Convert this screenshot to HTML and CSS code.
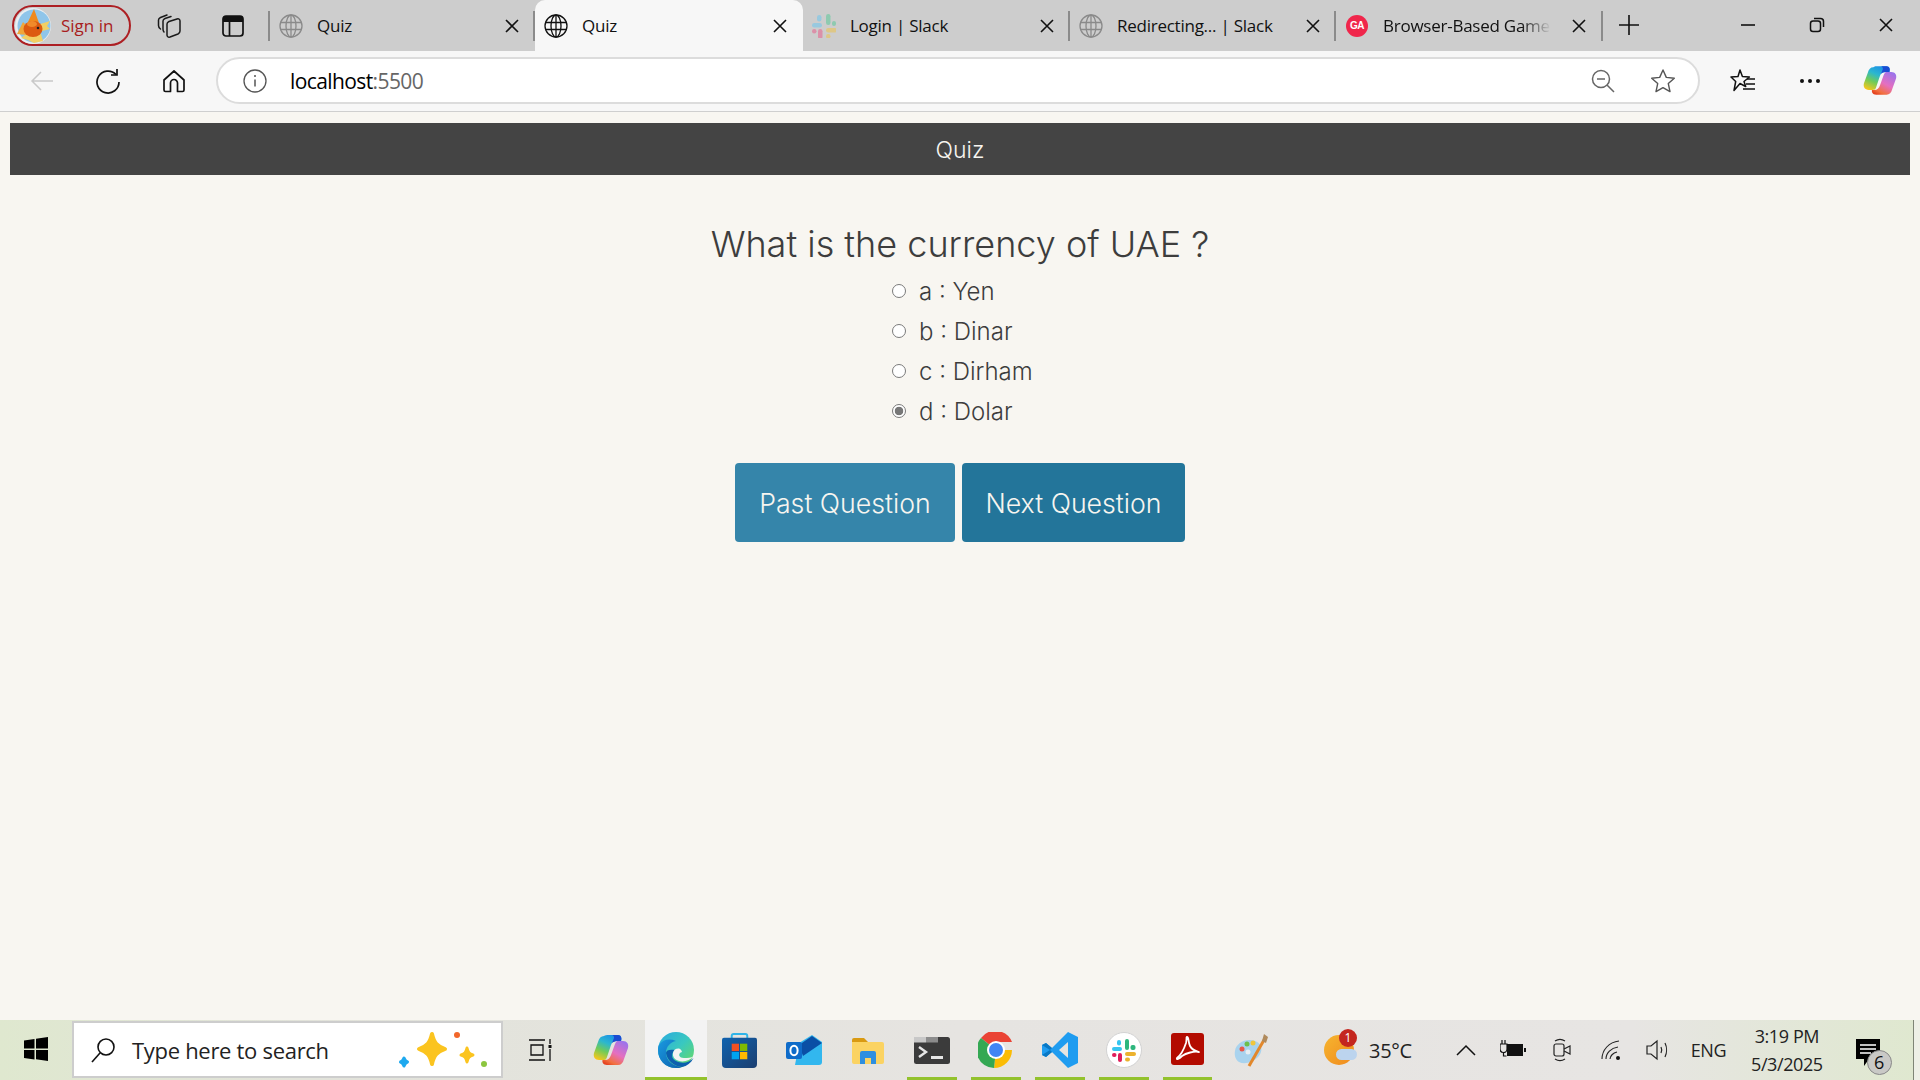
FILE: index.html
```html
<!DOCTYPE html>
<html lang="en">
<head>
<meta charset="utf-8">
<title>Quiz</title>
<link rel="stylesheet" href="styles.css">
</head>
<body>
<svg class="defs" width="0" height="0" aria-hidden="true">
  <defs>
    <linearGradient id="cpA" x1="0.7" y1="0" x2="0.2" y2="1"><stop offset="0" stop-color="#1b8fe6"/><stop offset=".35" stop-color="#2bb7d0"/><stop offset=".65" stop-color="#6fcb5a"/><stop offset="1" stop-color="#f6c71c"/></linearGradient>
    <linearGradient id="cpB" x1="0.8" y1="0" x2="0.2" y2="1"><stop offset="0" stop-color="#9a74ec"/><stop offset=".5" stop-color="#e56fc0"/><stop offset=".85" stop-color="#f2713f"/><stop offset="1" stop-color="#e5421f"/></linearGradient>
    <linearGradient id="edgeG" x1="0" y1="0" x2="1" y2="1"><stop offset="0" stop-color="#2aa9e0"/><stop offset=".5" stop-color="#39c8c0"/><stop offset="1" stop-color="#6fdc58"/></linearGradient>
    <linearGradient id="edgeB" x1="0" y1="0" x2="1" y2="1"><stop offset="0" stop-color="#1a9be0"/><stop offset="1" stop-color="#0c5fae"/></linearGradient>
    <linearGradient id="storeG" x1="0" y1="0" x2="1" y2="1"><stop offset="0" stop-color="#0f62ae"/><stop offset="1" stop-color="#1c3f70"/></linearGradient>
    <symbol id="globe" viewBox="0 0 24 24"><g fill="none" stroke="currentColor" stroke-width="1.3"><circle cx="12" cy="12" r="11"/><ellipse cx="12" cy="12" rx="5" ry="11"/><path d="M1.5 8.500h21M1.5 15.500h21M12 1v22"/></g></symbol>
    <symbol id="x" viewBox="0 0 16 16"><path d="M2 2l12 12M14 2L2 14" fill="none" stroke="currentColor" stroke-width="1.6"/></symbol>
    <symbol id="copilot" viewBox="0 0 36 32">
      <path d="M11 2C12 1 14 1 15 1H25C28 1 29 4 28 7H24C21 7 19 8 18 11L14 23C13 26 12 26 10 26H6C2 26 0 23 1 19L5 8C6 4 8 2 11 2Z" fill="url(#cpA)"/>
      <path d="M19 1H25C28 1 29 4 28 7H24C22 7 20 8 19 9L21 4C21.500 2.500 20 1 19 1Z" fill="#1a4cd2"/>
      <path d="M25 31H14C10 31 9 28 9.500 26H12C15 26 17 24 18 21L22 10C23 7.500 24 7 25 7H30C34 7 36 10 35 14L31 25C30 29 28 31 25 31Z" fill="url(#cpB)"/>
    </symbol>
  </defs>
</svg>

<header class="tabstrip">
  <button class="signin">
    <svg class="avatar" viewBox="0 0 36 36"><circle cx="18" cy="18" r="18" fill="#e9eef2"/><circle cx="19" cy="18" r="16.500" fill="#8fc5ea"/><path d="M22 17l13-4-3 5 3 3-12 3zM6 30l8-6 12 2 2 7-9 2-6-3z" fill="#f2cf63"/><path d="M13 14L19 1l5 14z" fill="#ef8a1e"/><path d="M2 26l6-12 5 5-1 8z" fill="#f0a63a"/><ellipse cx="18" cy="21" rx="9.500" ry="8" fill="#dc5a10"/><ellipse cx="17" cy="16" rx="5" ry="3" fill="#f08a2a"/><circle cx="23" cy="20" r="1.300" fill="#222"/></svg>
    <span>Sign in</span>
  </button>
  <div class="strip-btn">
    <svg width="24" height="24" viewBox="0 0 24 24"><g fill="none" stroke="#1a1a1a" stroke-width="1.500" stroke-linecap="round" stroke-linejoin="round"><path d="M10 10C10 8.500 11 8 12 7.500L20 5C22 4.500 23 5.500 23 7V17C23 18.500 22 19.500 21 20L13 23C11 23.500 10 22.500 10 21Z"/><path d="M7 18C6 17 6 16 6 15V7C6 5.500 7 5 8 4.500L14 2.500"/><path d="M3.500 15C2 14 1.500 13 1.500 11.500V6C1.500 4.500 2.500 4 3.500 3.500L10 1"/></g></svg>
  </div>
  <div class="strip-btn">
    <svg width="22" height="22" viewBox="0 0 22 22"><rect x="1" y="1" width="20" height="20" rx="3" fill="none" stroke="#111" stroke-width="1.700"/><path d="M1 3.500a2.500 2.500 0 012.500-2.500h15a2.500 2.500 0 012.500 2.500V7H1z" fill="#111"/><path d="M7.500 7v14" stroke="#111" stroke-width="1.700"/></svg>
  </div>
  <div class="tabs">
    <div class="tab tab-sep">
      <svg class="fav fav-dim"><use href="#globe"/></svg><span class="tab-title">Quiz</span><svg class="close"><use href="#x"/></svg>
    </div>
    <div class="tab tab-active">
      <svg class="fav"><use href="#globe"/></svg><span class="tab-title">Quiz</span><svg class="close"><use href="#x"/></svg>
    </div>
    <div class="tab tab-sep">
      <svg class="fav" viewBox="0 0 24 24"><g opacity=".55"><rect x="0" y="9" width="10" height="4.500" rx="2.200" fill="#6ec7ee"/><rect x="5" y="1" width="4.500" height="6.500" rx="2.200" fill="#6ec7ee"/><rect x="14" y="0" width="4.500" height="11" rx="2.200" fill="#5cc89a"/><rect x="20" y="7" width="4" height="5" rx="2" fill="#5cc89a"/><rect x="14" y="14" width="11" height="4.500" rx="2.200" fill="#edc34d"/><rect x="14" y="20" width="4.500" height="4.500" rx="2.200" fill="#edc34d"/><rect x="6" y="15" width="4.500" height="10" rx="2.200" fill="#e8618c"/><rect x="0" y="15" width="4.500" height="4.500" rx="2.200" fill="#e8618c"/></g></svg><span class="tab-title">Login | Slack</span><svg class="close"><use href="#x"/></svg>
    </div>
    <div class="tab tab-sep">
      <svg class="fav fav-dim"><use href="#globe"/></svg><span class="tab-title">Redirecting... | Slack</span><svg class="close"><use href="#x"/></svg>
    </div>
    <div class="tab tab-sep">
      <svg class="fav" viewBox="0 0 24 24"><circle cx="12" cy="12" r="11" fill="#f0264b"/></svg><span class="ga">GA</span><span class="tab-title tab-fade">Browser-Based Game</span><svg class="close"><use href="#x"/></svg>
    </div>
  </div>
  <div class="newtab">
    <svg width="22" height="22" viewBox="0 0 22 22"><path d="M11 1v20M1 11h20" stroke="#111" stroke-width="1.6"/></svg>
  </div>
  <div class="window-btns">
    <div class="win-btn"><svg width="16" height="16" viewBox="0 0 16 16"><path d="M1 8h14" stroke="#111" stroke-width="1.600"/></svg></div>
    <div class="win-btn"><svg width="16" height="16" viewBox="0 0 16 16"><rect x="1.500" y="4" width="10" height="10.500" rx="2.500" fill="none" stroke="#111" stroke-width="1.500"/><path d="M5 1.500h6.500a3 3 0 013 3V10" fill="none" stroke="#111" stroke-width="1.500"/></svg></div>
    <div class="win-btn"><svg width="16" height="16" viewBox="0 0 16 16"><use href="#x"/></svg></div>
  </div>
</header>

<nav class="toolbar">
  <div class="tool-btn">
    <svg width="24" height="22" viewBox="0 0 24 22"><path d="M23 11H2M11 2l-9 9 9 9" fill="none" stroke="#c9c9c9" stroke-width="1.500"/></svg>
  </div>
  <div class="tool-btn">
    <svg width="26" height="26" viewBox="0 0 26 26"><path d="M21 6.500A11 11 0 1024 14" fill="none" stroke="#111" stroke-width="1.700"/><path d="M16 7h6V1" fill="none" stroke="#111" stroke-width="1.700"/></svg>
  </div>
  <div class="tool-btn">
    <svg width="24" height="24" viewBox="0 0 24 24"><path d="M2 11L12 2l10 9v10a1.500 1.500 0 01-1.500 1.500H15.500V14a3.500 3.500 0 00-7 0v8.500H3.500A1.500 1.500 0 012 21z" fill="none" stroke="#111" stroke-width="1.700" stroke-linejoin="round"/></svg>
  </div>
  <div class="address">
    <svg class="addr-info" width="24" height="24" viewBox="0 0 24 24"><circle cx="12" cy="12" r="11" fill="none" stroke="#555" stroke-width="1.300"/><path d="M12 10.500v7" stroke="#555" stroke-width="1.500"/><circle cx="12" cy="7" r="1" fill="#555"/></svg>
    <span class="url">localhost<span class="port">:5500</span></span>
    <svg class="addr-zoom" width="24" height="24" viewBox="0 0 24 24"><circle cx="10" cy="10" r="8.500" fill="none" stroke="#666" stroke-width="1.500"/><path d="M6 10h8M16 16l7 7" stroke="#666" stroke-width="1.500"/></svg>
    <svg class="addr-star" width="26" height="26" viewBox="0 0 26 26"><path d="M13 2l3.300 7.400 8 .8-6 5.400 1.700 8L13 19.600 6 23.600l1.700-8-6-5.400 8-.8z" fill="none" stroke="#555" stroke-width="1.400" stroke-linejoin="round"/></svg>
  </div>
  <div class="tool-right">
    <div class="tool-item"><svg width="26" height="26" viewBox="0 0 26 26"><path d="M10 2l2.400 6.500 7 .5-5.400 4.500 1.700 5-5.700-3-6 7 1.700-9L1 9l7-.5z" fill="none" stroke="#111" stroke-width="1.500" stroke-linejoin="round"/><path d="M17 11h8M16 16h9M13 21h12" stroke="#111" stroke-width="1.500"/></svg></div>
    <div class="tool-item tool-dots"><i></i><i></i><i></i></div>
    <div class="tool-item tool-copilot"><svg width="34" height="31"><use href="#copilot"/></svg></div>
  </div>
</nav>

<main class="page">
  <div class="bar">Quiz</div>
  <section class="quiz">
    <h1 class="question">What is the currency of UAE ?</h1>
    <form class="options">
      <label class="option"><input type="radio" name="q"><span>a : Yen</span></label>
      <label class="option"><input type="radio" name="q"><span>b : Dinar</span></label>
      <label class="option"><input type="radio" name="q"><span>c : Dirham</span></label>
      <label class="option"><input type="radio" name="q" checked><span>d : Dolar</span></label>
    </form>
    <div class="actions">
      <button class="btn btn-past" type="button">Past Question</button>
      <button class="btn btn-next" type="button">Next Question</button>
    </div>
  </section>
</main>

<footer class="taskbar">
  <div class="start">
    <svg width="24" height="24" viewBox="0 0 24 24"><path d="M0 3.500L10.500 2v9.500H0zM12 1.800L24 0v11.500H12zM0 13h10.500v9.500L0 21zM12 13h12v11l-12-1.800z" fill="#000"/></svg>
  </div>
  <div class="search">
    <svg width="26" height="26" viewBox="0 0 26 26"><circle cx="16" cy="10" r="8" fill="none" stroke="#111" stroke-width="1.600"/><path d="M10 16L2 25" stroke="#111" stroke-width="1.600"/></svg>
    <span class="search-text">Type here to search</span>
    <svg class="sparkle" width="92" height="40" viewBox="0 0 92 40"><g stroke-linejoin="round"><path d="M36 4c2 9 5 12 13 15-8 3-11 6-13 15-2-9-5-12-13-15 8-3 11-6 13-15z" fill="#fbc41f" stroke="#fbc41f" stroke-width="4"/><path d="M71 18c1 4 2 6 6 7-4 1-5 3-6 7-1-4-2-6-6-7 4-1 5-3 6-7z" fill="#fbc41f" stroke="#fbc41f" stroke-width="3"/><path d="M8 28c1 2 1 3 3.500 4-2.500 1-2.500 2-3.500 4-1-2-1-3-3.500-4 2.500-1 2.500-2 3.500-4z" fill="#1ea9ef" stroke="#1ea9ef" stroke-width="3"/></g><circle cx="61" cy="5" r="3" fill="#f2672a"/><circle cx="88" cy="34" r="3" fill="#8cc63f"/></svg>
  </div>
  <div class="task-icons">
    <div class="slot"><svg width="24" height="24" viewBox="0 0 24 24"><g fill="none" stroke="#111" stroke-width="1.300"><path d="M1 2h16M1 22h16M3 7h12v10H3zM22 1v5M22 11v12"/></g><rect x="20.500" y="7" width="3" height="3" fill="#111"/></svg></div>
    <div class="slot"><svg width="36" height="32"><use href="#copilot"/></svg></div>
    <div class="slot slot-active on"><svg width="36" height="36" viewBox="0 0 36 36"><circle cx="18" cy="18" r="18" fill="url(#edgeG)"/><path d="M1 13C4 8 11 6 18 9C12 10 8 15 8 21C8 28 14 34 24 35C22 36 20 36 18 36C7 36 0 28 0 18C0 16 0 15 1 13Z" fill="url(#edgeB)"/><path d="M8 21C9 28 15 34 24 35C29 34 33 31 35.500 26C31 31 24 32 18 29C13 27 13 21 17 18C12 17 8 18 8 21Z" fill="#0c5fae"/><path d="M21 16.500C15 16 13 23 17 27C22 31 31 30 36 24C33 26 30 26 26 26C20 26 20 21 24 20C23.500 18 22.500 17 21 16.500Z" fill="#f3f3f3"/></svg></div>
    <div class="slot"><svg width="35" height="35" viewBox="0 0 36 36"><path d="M10 7V3a2 2 0 012-2h12a2 2 0 012 2v4" fill="none" stroke="#2fb4e8" stroke-width="2"/><path d="M0 7a2 2 0 012-2h32a2 2 0 012 2v25a4 4 0 01-4 4H4a4 4 0 01-4-4z" fill="url(#storeG)"/><rect x="10" y="11" width="7.500" height="7.500" fill="#f25022"/><rect x="18.500" y="11" width="7.500" height="7.500" fill="#7fba00"/><rect x="10" y="19.500" width="7.500" height="7.500" fill="#00a4ef"/><rect x="18.500" y="19.500" width="7.500" height="7.500" fill="#ffb900"/></svg></div>
    <div class="slot"><svg width="36" height="30" viewBox="0 0 36 30"><path d="M13 8L26 0l10 7v20a3 3 0 01-3 3H9z" fill="#32b7ee"/><path d="M13 10L26 1l10 7-19 13z" fill="#0a4fa5"/><rect x="0" y="7" width="16" height="17" rx="2" fill="#0f6cc9"/><ellipse cx="8" cy="15.500" rx="3.600" ry="4.800" fill="none" stroke="#fff" stroke-width="2"/></svg></div>
    <div class="slot"><svg width="32" height="27" viewBox="0 0 32 27"><path d="M0 3a2 2 0 012-2h10l4 4H0z" fill="#d99a12"/><path d="M0 5h30a2 2 0 012 2v18a2 2 0 01-2 2H2a2 2 0 01-2-2z" fill="#fbd362"/><path d="M8 27V16a2 2 0 012-2h12a2 2 0 012 2v11h-5v-6h-6v6z" fill="#2e8fe0"/></svg></div>
    <div class="slot on"><svg width="36" height="27" viewBox="0 0 36 27"><rect width="36" height="27" rx="2.500" fill="#3b3b3b"/><rect x="0" y="0" width="12" height="5.500" fill="#c8c8c8"/><rect x="12" y="0" width="12" height="5.500" fill="#8c8c8c"/><path d="M5 10l7 5-7 5" fill="none" stroke="#e6e6e6" stroke-width="2.400"/><rect x="17" y="19" width="12" height="3" fill="#e6e6e6"/></svg></div>
    <div class="slot on"><svg width="36" height="36" viewBox="0 0 36 36"><path d="M18 18L3 6a18 18 0 0131 4H18z" fill="#ea4335"/><path d="M18 18H34a18 18 0 01-18 18z" fill="#fbbc05"/><path d="M18 18L16 36A18 18 0 013 6z" fill="#34a853"/><circle cx="18" cy="18" r="9" fill="#fff"/><circle cx="18" cy="18" r="7" fill="#4285f4"/></svg></div>
    <div class="slot on"><svg width="36" height="36" viewBox="0 0 36 36"><path d="M26 0l10 5v26l-10 5L10 20l-6 5-4-2V13l4-2 6 5z" fill="#1f9cf0"/><path d="M26 0L8 18 0 13l4-2 6 5z" fill="#0a78c4"/><path d="M26 36L8 18l-8 5 4 2 6-5z" fill="#0a78c4"/><path d="M26 10v16l-9-8z" fill="#e6e4e0"/></svg></div>
    <div class="slot on"><svg width="36" height="36" viewBox="0 0 36 36"><circle cx="18" cy="18" r="17.500" fill="#fff" stroke="#d2d2d2"/><rect x="6" y="15" width="10" height="4" rx="2" fill="#36c5f0"/><rect x="11" y="8" width="4" height="5.500" rx="2" fill="#36c5f0"/><rect x="19" y="7" width="4" height="11" rx="2" fill="#2eb67d"/><rect x="24.500" y="13" width="5" height="5" rx="2" fill="#2eb67d"/><rect x="19" y="20" width="11" height="4" rx="2" fill="#ecb22e"/><rect x="19" y="25.500" width="5" height="4" rx="2" fill="#ecb22e"/><rect x="12" y="21" width="4" height="9" rx="2" fill="#e01e5a"/><rect x="6" y="21" width="4.500" height="4" rx="2" fill="#e01e5a"/></svg></div>
    <div class="slot slot-up on"><svg width="33" height="32" viewBox="0 0 33 32"><rect width="33" height="32" rx="3" fill="#b30b00"/><path d="M6 25C10 22 13 16 15 10C16 6 15 4 16 4C18 4 17 9 19 13C21 17 24 18 28 19C23 18 15 20 11 23C8 26 5 27 6 25Z" fill="none" stroke="#fff" stroke-width="1.800" stroke-linejoin="round"/></svg></div>
    <div class="slot"><svg width="34" height="34" viewBox="0 0 34 34"><path d="M1 18C2 10 12 5 21 8c8 3 8 11 3 16-5 5-13 8-19 5-3-2-5-6-4-11z" fill="#a9d3ee"/><circle cx="8" cy="16" r="2.500" fill="#e8584c"/><circle cx="13" cy="11" r="2.500" fill="#6cbf4c"/><circle cx="19" cy="10" r="2.500" fill="#f0c63c"/><circle cx="14" cy="19" r="2.500" fill="#e6eef3"/><path d="M15 33L30 7" stroke="#e2882c" stroke-width="3"/><path d="M28 8l2-7 4 3-2 6z" fill="#b08a5c"/></svg></div>
  </div>
  <div class="weather">
    <span class="wx-icon">
      <span class="wx-sun"></span><span class="wx-cloud"></span><span class="wx-badge">1</span>
    </span>
    <span class="wx-temp">35°C</span>
  </div>
  <div class="tray">
    <svg class="tray-chev" width="20" height="12" viewBox="0 0 20 12"><path d="M1 11l9-9 9 9" fill="none" stroke="#111" stroke-width="1.500"/></svg>
    <svg class="tray-batt" width="26" height="20" viewBox="0 0 26 20"><rect x="7" y="4" width="16" height="12" fill="#111"/><rect x="24" y="8" width="2" height="4" fill="#111"/><path d="M2 0v4M5 0v4M0 4h7v5a3.500 3.500 0 01-7 0zM3.500 12v4h3" fill="none" stroke="#111" stroke-width="1.200"/></svg>
    <svg class="tray-meet" width="18" height="24" viewBox="0 0 18 24"><rect x="1" y="6" width="10" height="12" rx="2" fill="none" stroke="#222" stroke-width="1.200"/><path d="M11 11l6-3v8l-6-3M2 3c3-2 7-2 10 0M2 21c3 2 7 2 10 0" fill="none" stroke="#222" stroke-width="1.200"/></svg>
    <svg class="tray-wifi" width="20" height="20" viewBox="0 0 20 20"><g fill="none" stroke="#222" stroke-width="1.100"><path d="M1 19C1 10 8 2 18 1M5 19c0-6 5-11 12-12M9 19c0-3 3-6 7-7"/></g><circle cx="17" cy="18" r="2" fill="#111"/></svg>
    <svg class="tray-vol" width="24" height="22" viewBox="0 0 24 22"><path d="M1 7h4l6-5v18l-6-5H1z" fill="none" stroke="#222" stroke-width="1.200"/><path d="M15 8c1 2 1 4 0 6M19 4c2 4 2 10 0 14" fill="none" stroke="#222" stroke-width="1.200"/></svg>
    <span class="tray-lang">ENG</span>
    <div class="clock"><span>3:19 PM</span><span>5/3/2025</span></div>
    <div class="notif">
      <svg width="24" height="28" viewBox="0 0 24 28"><path d="M0 0h24v20H13l-5 7v-7H0z" fill="#000"/><path d="M4 6h16M4 10h16M4 14h11" stroke="#fff" stroke-width="1.300"/></svg>
      <span class="notif-count">6</span>
    </div>
  </div>
</footer>
</body>
</html>
```

FILE: styles.css
```css
* { box-sizing: border-box; }

html, body { height: 100%; }

body {
  margin: 0;
  display: flex;
  flex-direction: column;
  height: 1080px;
  overflow: hidden;
  background: #f8f6f1;
  font-family: "Open Sans", "Noto Sans", sans-serif;
  color: #111;
}

.defs { position: absolute; }

/* Tab strip */
.tabstrip {
  display: flex;
  flex: 0 0 51px;
  align-items: stretch;
  padding-left: 12px;
  background: #cdcdcd;
}

.signin {
  display: flex;
  align-items: center;
  gap: 10px;
  width: 119px;
  height: 41px;
  margin: 5px 6px 0 0;
  padding: 0 0 0 1px;
  border: 2px solid #ad1f23;
  border-radius: 21px;
  background: transparent;
  font: 400 17px "Open Sans", sans-serif;
  color: #a81d21;
}

.avatar { width: 36px; height: 36px; flex: none; }

.strip-btn {
  display: flex;
  flex: 0 0 64px;
  align-items: center;
  justify-content: center;
}

.tabs {
  display: grid;
  grid-template-columns: 265px 268px 267px 266px 267px;
  margin-left: 5px;
}

.tab {
  position: relative;
  display: flex;
  align-items: center;
  padding: 0 15px 0 9px;
  font-size: 17px;
  letter-spacing: -0.25px;
}

.tab-sep::after {
  content: "";
  position: absolute;
  top: 11px;
  right: 0;
  width: 2px;
  height: 30px;
  background: #8b8b8b;
}

.tab:first-child::before {
  content: "";
  position: absolute;
  top: 11px;
  left: -2px;
  width: 2px;
  height: 30px;
  background: #8b8b8b;
}

.tab-active {
  border-radius: 10px 10px 0 0;
  background: #f7f7f7;
}

.fav { width: 24px; height: 24px; flex: none; margin-right: 14px; }
.fav-dim { color: #8a8a8a; }

.tab-title { flex: 1; white-space: nowrap; overflow: hidden; }

.tab-fade {
  flex: 0 0 168px;
  margin-right: 20px;
  mask-image: linear-gradient(90deg, #000 82%, transparent 100%);
}

.ga {
  position: absolute;
  left: 9px;
  width: 24px;
  font: 700 10px "Liberation Sans", sans-serif;
  letter-spacing: -0.5px;
  text-align: center;
  color: #fff;
}

.close { width: 16px; height: 16px; flex: none; color: #111; }

.newtab {
  display: flex;
  flex: 0 0 52px;
  align-items: center;
  justify-content: center;
  padding-bottom: 2px;
}

.window-btns {
  display: flex;
  flex: 1;
  justify-content: flex-end;
  align-items: center;
}

.win-btn {
  display: flex;
  width: 69px;
  justify-content: center;
  padding-bottom: 2px;
}

/* Toolbar */
.toolbar {
  display: flex;
  flex: 0 0 61px;
  align-items: center;
  padding: 0 0 1px 9px;
  border-bottom: 1px solid #cfcfcf;
  background: #f7f7f7;
}

.tool-btn {
  display: flex;
  flex: 0 0 66px;
  justify-content: center;
}

.address {
  display: flex;
  flex: 0 0 1484px;
  align-items: center;
  height: 47px;
  margin-left: 9px;
  padding: 0 22px 0 25px;
  border: 2px solid #dcdcdc;
  border-radius: 24px;
  background: #fff;
}

.url {
  flex: 1;
  margin-left: 23px;
  font-size: 21px;
  letter-spacing: -0.6px;
  color: #000;
}

.port { color: #666; }

.addr-zoom { margin-right: 35px; }

.tool-right {
  display: grid;
  grid-template-columns: 86px 48px 86px;
  flex: 1;
}

.tool-item {
  display: flex;
  align-items: center;
  justify-content: center;
}

.tool-copilot { padding-left: 5px; }

.tool-dots { gap: 4px; }
.tool-dots i { width: 4px; height: 4px; border-radius: 50%; background: #111; }

/* Page */
.page {
  flex: 1;
  padding: 11px 10px 0;
  font-family: Inter, "Liberation Sans", sans-serif;
  font-weight: 300;
  color: #3d3d3d;
}

.bar {
  height: 52px;
  padding-top: 1px;
  line-height: 52px;
  background: #444;
  font-size: 23px;
  text-align: center;
  color: #f7f5f0;
}

.quiz {
  display: flex;
  flex-direction: column;
  align-items: center;
}

.question {
  margin: 48px 0 0;
  font-size: 36px;
  font-weight: 300;
  line-height: 42px;
}

.options {
  display: flex;
  flex-direction: column;
  width: 136px;
  margin-top: 6px;
}

.option {
  display: flex;
  align-items: center;
  gap: 13px;
  height: 40px;
  font-size: 24px;
  white-space: nowrap;
}

.option input {
  flex: none;
  width: 14px;
  height: 14px;
  margin: 0;
  appearance: none;
  border: 1.500px solid #7a7a7a;
  border-radius: 50%;
  background: #fff;
}

.option input:checked {
  background: radial-gradient(circle, #777 0 4px, #fff 4.600px);
}

.actions {
  display: flex;
  gap: 7px;
  margin-top: 32px;
}

.btn {
  height: 79px;
  border: 0;
  border-radius: 4px;
  font: 300 26.700px Inter, "Liberation Sans", sans-serif;
  color: #f7f5f0;
}

.btn-past { width: 220px; background: #3585aa; }
.btn-next { width: 223px; background: #23759a; }

/* Taskbar */
.taskbar {
  position: relative;
  display: flex;
  flex: 0 0 60px;
  align-items: stretch;
  background: linear-gradient(90deg, #dfe8cf 0, #e2e3da 300px, #e6e4e1 50%, #e7e5e3 85%, #dfe8cf 100%);
}

.taskbar::after {
  content: "";
  position: absolute;
  top: 0;
  right: 0;
  bottom: 0;
  width: 6px;
  border-left: 1px solid #7f8576;
  background: #eef0e6;
}

.start {
  display: flex;
  flex: 0 0 72px;
  align-items: center;
  justify-content: center;
  padding-bottom: 2px;
}

.search {
  display: flex;
  flex: 0 0 431px;
  align-items: center;
  margin: 1px 0 2px;
  padding: 0 13px 0 16px;
  border: 2px solid #cdcdcd;
  background: #fff;
}

.search-text {
  flex: 1;
  margin-left: 16px;
  padding-top: 1px;
  font-size: 22px;
  letter-spacing: -0.3px;
  color: #222;
}

.task-icons {
  display: grid;
  grid-template-columns: 72px 69px 62px 65px 64px 64px 64px 64px 64px 64px 63px 64px;
  margin-left: 1px;
}

.slot {
  position: relative;
  display: flex;
  align-items: center;
  justify-content: center;
}

.slot-active { background: #f3f3f3; }
.slot-up { padding-bottom: 2px; }

.slot.on::after {
  content: "";
  position: absolute;
  left: 7px;
  right: 7px;
  bottom: 0;
  height: 3px;
  background: #93c22d;
}

.slot-active.on::after { left: 0; right: 0; }

.weather {
  display: flex;
  align-items: center;
  gap: 14px;
  margin-left: 39px;
}

.wx-icon { position: relative; width: 33px; height: 36px; }

.wx-sun {
  position: absolute;
  left: 2px;
  top: 3px;
  width: 30px;
  height: 30px;
  border-radius: 50%;
  background: linear-gradient(135deg, #f6b52f, #f08a1e);
}

.wx-cloud {
  position: absolute;
  left: 14px;
  top: 17px;
  width: 21px;
  height: 11px;
  border-radius: 6px;
  background: #bcd4ee;
}

.wx-badge {
  position: absolute;
  left: 17px;
  top: -3px;
  width: 18px;
  height: 18px;
  border-radius: 50%;
  background: #c4261f;
  font-size: 12px;
  line-height: 18px;
  text-align: center;
  color: #fff;
}

.wx-temp { font-size: 20px; letter-spacing: -0.3px; color: #222; }

.tray {
  display: flex;
  flex: 1;
  align-items: center;
  font-size: 18px;
  color: #222;
}

.tray-chev { margin-left: 44px; }
.tray-batt { margin-left: 24px; }
.tray-meet { margin-left: 27px; }
.tray-wifi { margin-left: 30px; }
.tray-vol { margin-left: 25px; }

.tray-lang { margin-left: 21px; letter-spacing: -0.5px; }

.clock {
  display: flex;
  flex-direction: column;
  align-items: center;
  gap: 4px;
  margin-left: 25px;
  font-size: 18px;
  line-height: 24px;
  letter-spacing: -0.4px;
}

.notif { position: relative; margin: 6px 0 0 33px; height: 28px; }

.notif-count {
  position: absolute;
  left: 11px;
  top: 11px;
  width: 25px;
  height: 25px;
  border: 1px solid #888;
  border-radius: 50%;
  background: #c9c9c6;
  font-size: 18px;
  line-height: 23px;
  text-align: center;
  color: #111;
}
```
